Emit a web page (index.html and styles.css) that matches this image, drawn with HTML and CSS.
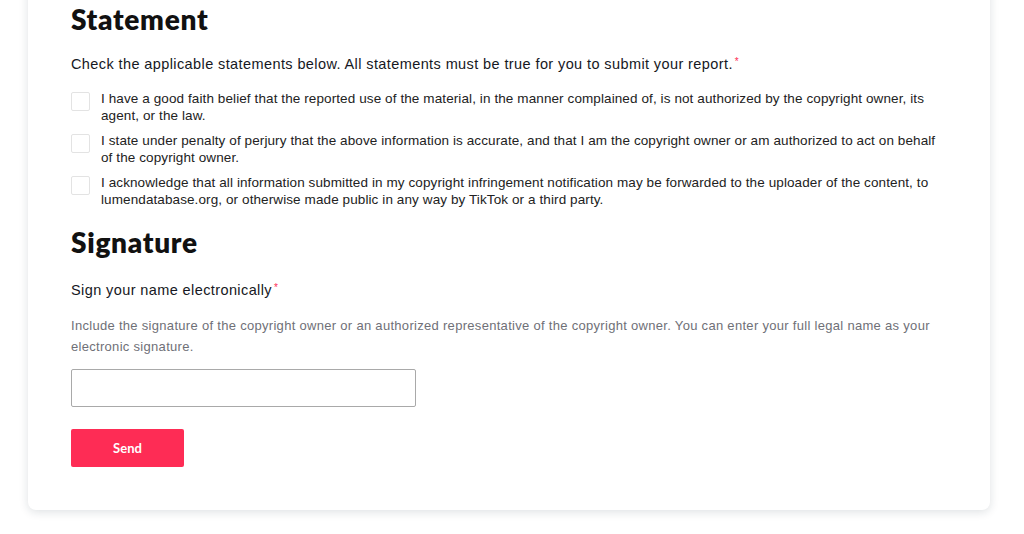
FILE: index.html
```html
<!DOCTYPE html>
<html>
<head>
<meta charset="utf-8">
<link rel="stylesheet" href="styles.css">
</head>
<body>
<div class="page">
  <div class="card">
    <h2 class="title">Statement</h2>
    <p class="label">Check the applicable statements below. All statements must be true for you to submit your report.<span class="req">*</span></p>
    <div class="checks">
      <label class="check"><span class="box"></span><span class="ctext">I have a good faith belief that the reported use of the material, in the manner complained of, is not authorized by the copyright owner, its agent, or the law.</span></label>
      <label class="check"><span class="box"></span><span class="ctext">I state under penalty of perjury that the above information is accurate, and that I am the copyright owner or am authorized to act on behalf of the copyright owner.</span></label>
      <label class="check"><span class="box"></span><span class="ctext">I acknowledge that all information submitted in my copyright infringement notification may be forwarded to the uploader of the content, to lumendatabase.org, or otherwise made public in any way by TikTok or a third party.</span></label>
    </div>
    <h2 class="title sig">Signature</h2>
    <p class="label">Sign your name electronically<span class="req">*</span></p>
    <p class="help">Include the signature of the copyright owner or an authorized representative of the copyright owner. You can enter your full legal name as your electronic signature.</p>
    <div class="input"></div>
    <button class="send">Send</button>
  </div>
</div>
</body>
</html>
```
FILE: styles.css
```css
html, body {
  margin: 0;
  padding: 0;
  background: #ffffff;
}
body {
  font-family: "Liberation Sans", Arial, sans-serif;
  color: #161823;
  overflow: hidden;
  height: 534px;
}
.page {
  padding: 0 34px 0 28px;
}
.card {
  margin-top: -20px;
  background: #fff;
  border-radius: 0 0 8px 8px;
  box-shadow: 0 2px 10px rgba(20, 40, 60, 0.14);
  padding: 22px 43px 43px 43px;
}
.title {
  margin: 0;
  font-family: "Lato", "Noto Sans", sans-serif;
  font-weight: 800;
  font-size: 28px;
  line-height: 34px;
  color: #111;
  letter-spacing: 0.7px;
}
.label {
  margin: 17px 0 0 0;
  font-size: 14.5px;
  line-height: 18px;
  color: #161823;
  letter-spacing: 0.4px;
}
.req {
  color: #fe2c55;
  font-size: 10px;
  vertical-align: 4px;
  margin-left: 2px;
}
.checks {
  margin-top: 17px;
  display: flex;
  flex-direction: column;
  gap: 8px;
}
.check {
  display: flex;
  align-items: flex-start;
  gap: 11px;
}
.box {
  flex: none;
  width: 17px;
  height: 17px;
  margin-top: 2px;
  border: 1px solid #e3e3e3;
  border-radius: 2px;
  background: #fff;
}
.ctext {
  font-size: 13.5px;
  line-height: 17px;
  color: #222;
  letter-spacing: 0.1px;
}
.sig {
  margin-top: 17px;
}
.sig + .label {
  margin-top: 20px;
}
.help {
  margin: 16px 0 0 0;
  font-size: 13px;
  line-height: 21px;
  color: #6f7077;
  letter-spacing: 0.3px;
}
.input {
  margin-top: 12px;
  width: 343px;
  height: 36px;
  border: 1px solid #a9a9a9;
  border-radius: 2px;
  background: #fff;
}
.send {
  display: block;
  margin-top: 22px;
  width: 113px;
  height: 38px;
  border: none;
  border-radius: 2px;
  background: #fe2c55;
  color: #fff;
  font-family: "Lato", sans-serif;
  font-weight: 700;
  font-size: 13px;
  padding: 0;
}
```
